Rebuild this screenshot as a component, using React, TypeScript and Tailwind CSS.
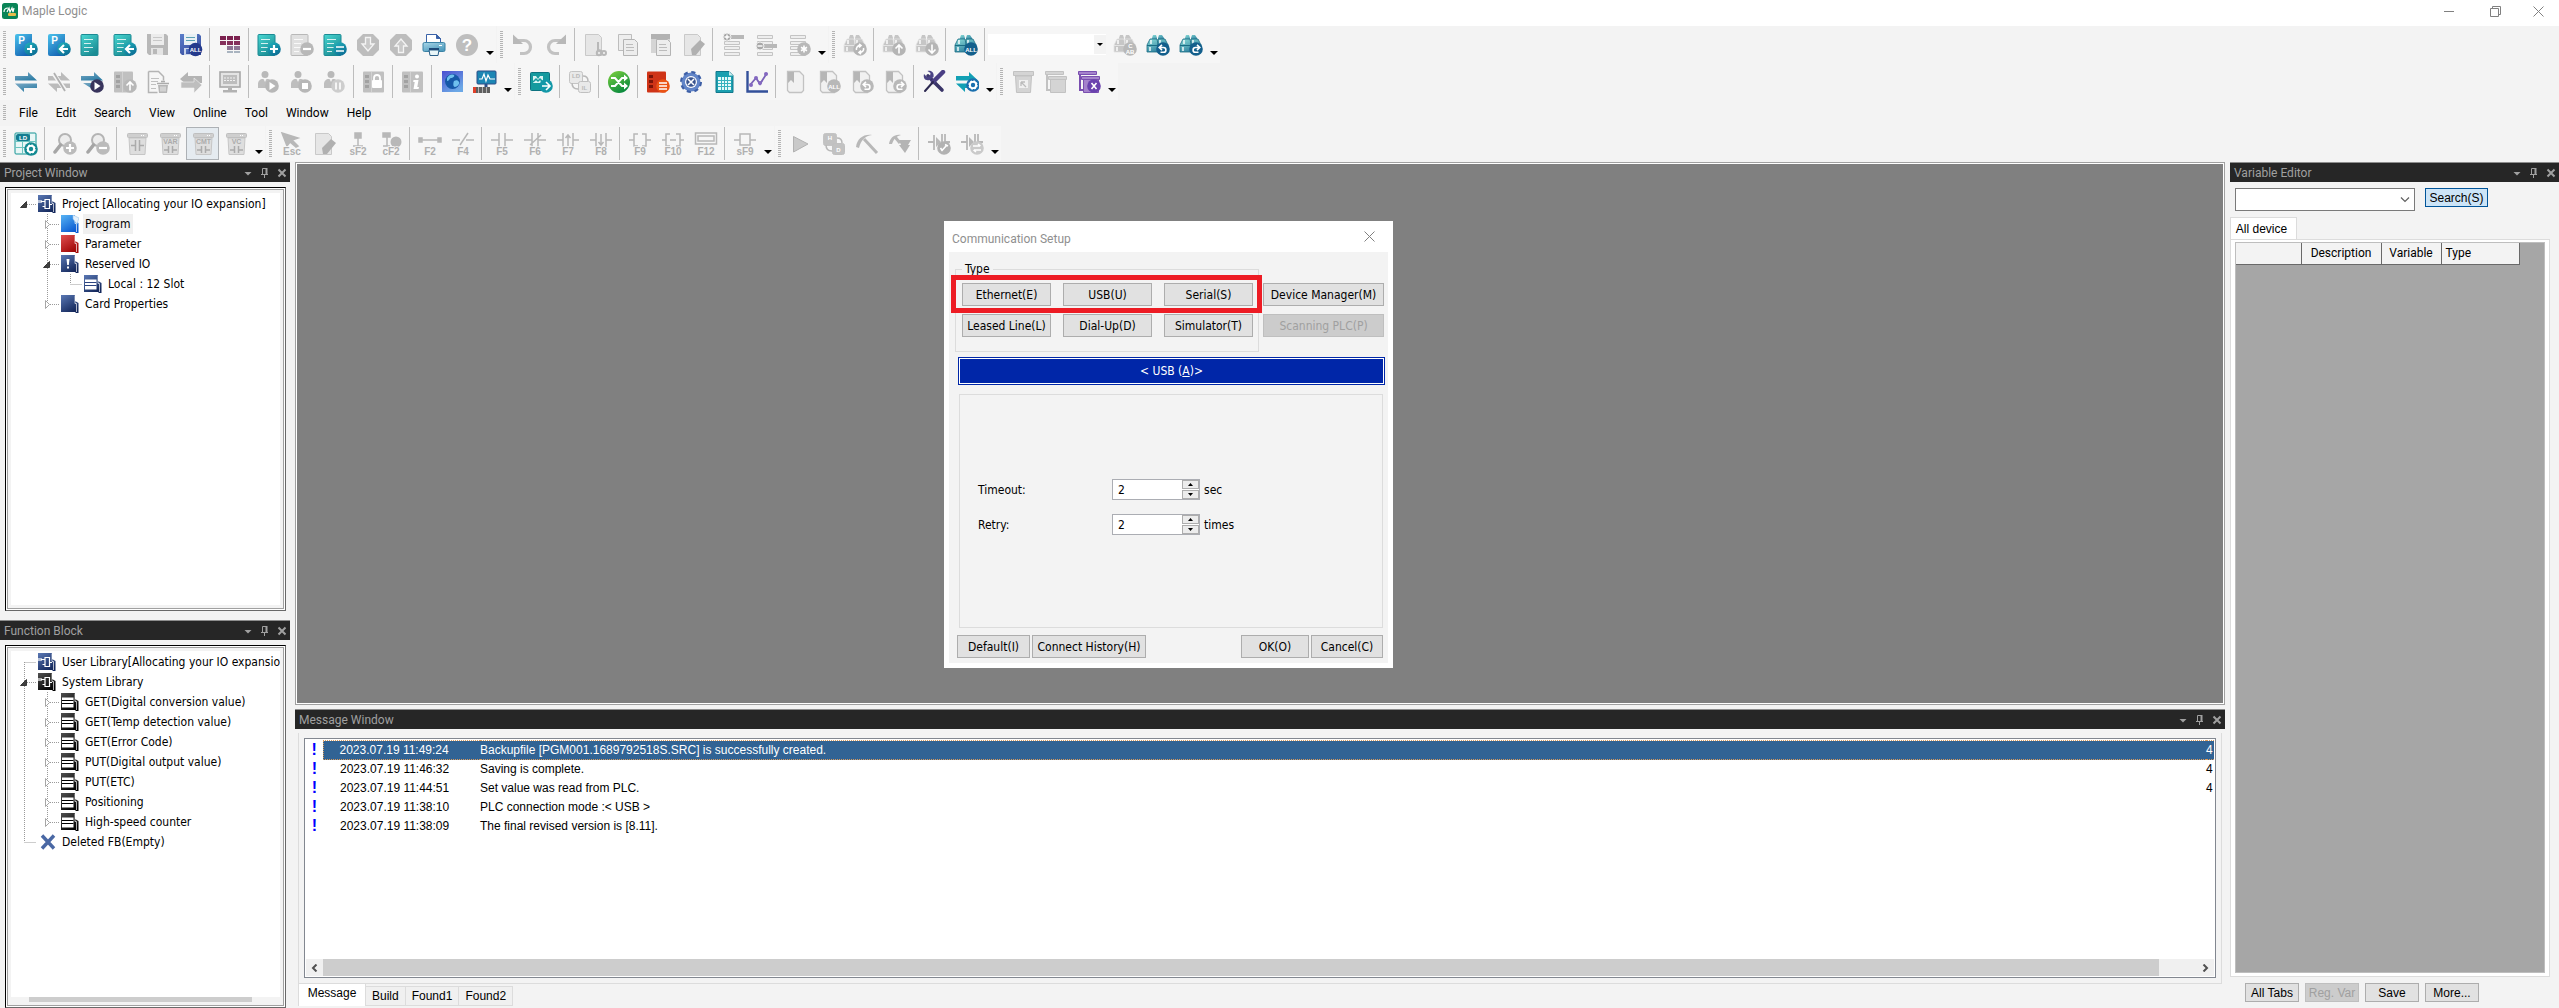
import type { ReactNode } from "react"

const GRAY = "#b8b8b8"

const MARKS: Record<string, string> = {
  plus: "M-4 0h8M0-4v8",
  minus: "M-4 0h8",
  left: "M4 0h-7M0-4l-4 4 4 4",
  right: "M-4 0h7M0-4l4 4-4 4",
  up: "M0 4.5v-8M-3.5-.5L0-4l3.5 3.5",
  down: "M0-4.5v8M-3.5.5L0 4l3.5-3.5",
  lines: "M-4-3h8M-4 0h8M-4 3h8",
  equal: "M-4-2h8M-4 2h8",
  undo: "M-3.5-1.5h4a2.4 2.4 0 0 1 0 4.8h-3M-1-4.2L-3.8-1.5-1 1.2",
  redo: "M3.5-1.5h-4a2.4 2.4 0 0 0 0 4.8h3M1-4.2L3.8-1.5 1 1.2",
  refresh: "M-3.5 1a3.6 3.6 0 0 1 4-4.5M3.5-1a3.6 3.6 0 0 1-4 4.5M-1-5l2 1.5-2 2M1 5l-2-1.5 2-2",
  cross: "M-2.5-3l5 6M2.5-3l-5 6",
  pause: "M-2-3.5v7M2-3.5v7",
  swap: "M-4-2h7M1-4l2.5 2M4 2h-7M-1 4l-2.5-2",
  star: "M0-3.5v7M-3-1.7l6 3.4M3-1.7l-6 3.4",
  wrench: "M-2.5 3l5-5.5M-3.5 0l2 3M1-3.5l3 1.5",
}

function Svg({ children }: { children: ReactNode }) {
  return (
    <svg viewBox="0 0 24 24" className="size-6 shrink-0" aria-hidden="true">
      {children}
    </svg>
  )
}

function Tag({ x, y, size = 6, fill = "#fff", children }: { x: number; y: number; size?: number; fill?: string; children: string }) {
  return (
    <text x={x} y={y} fontSize={size} fill={fill} textAnchor="middle" fontWeight="700" fontFamily="Liberation Sans, sans-serif">
      {children}
    </text>
  )
}

function Badge({ mark, fill = GRAY, x = 17, y = 16 }: { mark: string; fill?: string; x?: number; y?: number }) {
  return (
    <g>
      <circle cx={x} cy={y} r="6.8" fill={fill} />
      {mark === "ALL" && <Tag x={x} y={y + 2.5}>ALL</Tag>}
      {mark === "play" && <path d={`M${x - 2.5} ${y - 4}l6 4-6 4z`} fill="#fff" />}
      {mark === "stop" && <rect x={x - 3} y={y - 3} width="6" height="6" fill="#fff" />}
      {mark === "gear" && <Gear x={x} y={y} r={4} fill="#fff" hole={fill} />}
      {MARKS[mark] && (
        <path
          d={MARKS[mark]}
          transform={`translate(${x} ${y})`}
          fill="none"
          stroke="#fff"
          strokeWidth={mark === "plus" || mark === "minus" || mark === "left" ? 2.2 : 1.6}
        />
      )}
    </g>
  )
}

function Gear({ x, y, r, fill, hole }: { x: number; y: number; r: number; fill: string; hole: string }) {
  return (
    <g>
      <circle cx={x} cy={y} r={r} fill={fill} stroke={fill} strokeWidth={r / 3} strokeDasharray={`${r * 0.42} ${r * 0.365}`} />
      <circle cx={x} cy={y} r={r} fill={fill} />
      <circle cx={x} cy={y} r={r * 0.55} fill={hole} />
    </g>
  )
}

function ProjectDoc({ mark }: { mark: string }) {
  return (
    <Svg>
      <path d="M3 1h15v22H3a2 2 0 0 1-2-2V3a2 2 0 0 1 2-2z" fill="url(#blue)" />
      <Tag x={7.5} y={11} size={10}>P</Tag>
      <Badge mark={mark} fill="url(#sea)" />
    </Svg>
  )
}

function ListDoc({ mark, fill = "url(#teal)", badge = "url(#sea)" }: { mark?: string; fill?: string; badge?: string }) {
  const edge = fill === "url(#teal)" ? "#1b8a94" : GRAY
  return (
    <Svg>
      <rect x="1" y="1.5" width="17" height="21" rx="1" fill={fill} stroke={edge} />
      <path d="M4 6.5h9M4 10.5h7M4 14.5h9M4 18.5h5" stroke="#fff" strokeOpacity=".8" />
      {mark && <Badge mark={mark} fill={badge} />}
    </Svg>
  )
}

function Floppy({ on }: { on?: boolean }) {
  const c = on ? "url(#navy)" : GRAY
  return (
    <Svg>
      <path d="M1 1h19l2 2v19H3l-2-2z" fill={c} />
      <rect x="5" y="1" width="13" height="11" fill={on ? "#e8f0f4" : "#ececec"} />
      <path d="M7 4.5h9M7 7.5h9" stroke={on ? "#5aa0b4" : "#c8c8c8"} />
      <rect x="5" y="15" width="12" height="7" fill={on ? "#c9d4ea" : "#e4e4e4"} />
      <rect x="7" y="16" width="4" height="5" fill={c} />
      {on && <Badge mark="ALL" fill="#243a8c" x={16.5} y={16.5} />}
    </Svg>
  )
}

function GridIcon() {
  return (
    <Svg>
      <path d="M2 3h6v4H2zM9 3h6v4H9zM16 3h6v4h-6z" fill="#7d2350" />
      <path d="M2 8h6v4H2zM9 8h6v4H9zM16 8h6v4h-6z" fill="#85305c" />
      <path d="M9 13h6v4H9zM16 13h6v4h-6z" fill="#8d7594" />
      <path d="M9 18h6v2H9zM16 18h6v2h-6z" fill="#a9b4c0" />
    </Svg>
  )
}

function ArrowDisc({ up }: { up?: boolean }) {
  return (
    <Svg>
      <path d="M7 1h10l6 6v10l-6 6H7l-6-6V7z" fill="#bdbdbd" />
      <path
        d="M9.5 4.5h5V11H18l-6 7-6-7h3.500z"
        transform={up ? "rotate(180 12 12)" : undefined}
        fill="#c9c9c9"
        stroke="#f4f4f4"
        strokeWidth="1.3"
      />
    </Svg>
  )
}

function Printer() {
  return (
    <Svg>
      <path d="M4.5 12V1.5h10l4 4V12z" fill="#fff" stroke="#3a62a8" />
      <path d="M14.5 1.5v4h4z" fill="#3a62a8" stroke="#3a62a8" />
      <rect x="1" y="9.5" width="22" height="9" rx="1.5" fill="url(#steel)" stroke="#3b82a5" />
      <path d="M17 12.5h3" stroke="#fff" />
      <path d="M7 17h10l-1 5.500H8z" fill="#e9f6f8" stroke="#2a5f88" />
      <path d="M7 16h10" stroke="#1e4a78" strokeWidth="2" />
    </Svg>
  )
}

function Help() {
  return (
    <Svg>
      <circle cx="12" cy="12" r="11" fill="#bebebe" />
      <Tag x={12} y={18} size={17}>?</Tag>
    </Svg>
  )
}

function Turn({ flip }: { flip?: boolean }) {
  return (
    <Svg>
      <g transform={flip ? "matrix(-1 0 0 1 24 0)" : undefined}>
        <path d="M6 7.5h7a6.500 6.500 0 0 1 0 13H9" fill="none" stroke="#c2c2c2" strokeWidth="3.2" />
        <path d="M2 1.5V11h10L8.500 7.500z" fill={GRAY} />
      </g>
    </Svg>
  )
}

function GrayDoc({ kind }: { kind: "cut" | "copy" | "paste" | "erase" }) {
  return (
    <Svg>
      {(kind === "cut" || kind === "erase") && <path d="M2.5 1.5h13l3 3v18h-16z" fill="#e6e6e6" stroke="#c9c9c9" />}
      {kind === "cut" && (
        <g fill="none" stroke={GRAY} strokeWidth="2">
          <path d="M15 9v9M16 17l4 2" />
          <circle cx="16" cy="20" r="2.2" />
          <circle cx="21" cy="20" r="2" />
        </g>
      )}
      {kind === "erase" && <path d="M9 16L18 7l5 4-9 11h-4z" fill="#b0b0b0" />}
      {kind === "copy" && <path d="M2.5 1.5h13v16h-13z" fill="#eee" stroke="#bdbdbd" />}
      {kind === "paste" && (
        <g>
          <path d="M2 2h19v18H2z" fill="#d5d5d5" />
          <path d="M2 1h19v5H2z" fill="#b2b2b2" />
        </g>
      )}
      {(kind === "copy" || kind === "paste") && (
        <g>
          <path d="M7.5 6.5h11l3 3v13h-14z" fill="#ededed" stroke="#b4b4b4" />
          <path d="M10 11.5h7M10 14.5h8M10 17.5h8" stroke="#bcbcbc" />
        </g>
      )}
    </Svg>
  )
}

function RowsIcon({ kind }: { kind: "add" | "del" | "star" }) {
  const y = kind === "add" ? 4 : 13
  return (
    <Svg>
      <path
        d="M3.5 2.5h15v3h-15zM3.5 8.5h15v3h-15zM3.5 13.5h15v3h-15zM3.5 19.5h15v3h-15z"
        fill="#eee"
        stroke="#c4c4c4"
      />
      {kind === "star" ? (
        <Badge mark="star" x={17} y={16} />
      ) : (
        <g>
          <path d={`M6 ${y - 2}h17v4H6z`} fill={GRAY} />
          <circle cx="6" cy={y} r="4" fill="#a8a8a8" stroke="#f0f0f0" />
          <path d={kind === "add" ? `M3.5 ${y}h5M6 ${y - 2.5}v5` : `M3.5 ${y}h5`} stroke="#fff" strokeWidth="1.4" />
        </g>
      )}
    </Svg>
  )
}

function Finder({ mark, on }: { mark: string; on?: boolean }) {
  const c = on ? "url(#bino)" : "#c6c6c6"
  const line = on ? "#1b6c84" : "#e4e4e4"
  return (
    <Svg>
      <path d="M6 5l1-3h3l1 3v3H5zM12 5l1-3h3l2 3v3h-6z" fill={c} />
      <path d="M4 6h7l1 5v8H1v-7zM12 6h7l3 6v7H12z" fill={c} stroke={line} strokeWidth=".8" />
      <path d="M1 12.5h11M12 12.5h9" stroke={line} />
      <path d="M5 7v4M14 7v4M4 14v4" stroke="#fff" strokeOpacity=".7" strokeWidth="2" />
      {mark === "CAB" ? (
        <g>
          <Badge mark="" />
          <Tag x={17.5} y={14.5}>C</Tag>
          <Tag x={17} y={20.5}>AB</Tag>
        </g>
      ) : (
        <Badge mark={mark} fill={on ? "#135f8c" : "#b5b5b5"} />
      )}
    </Svg>
  )
}

function Arrows({ kind }: { kind: "on" | "off" | "run" | "fat" | "gear" }) {
  if (kind === "fat")
    return (
      <Svg>
        <path d="M1 9l8-7v4h14v7H9v3z" fill="#b4b4b4" />
        <path d="M23 15l-8-7v4H2v6h13v5z" fill="#bebebe" stroke="#f4f4f4" strokeWidth=".6" />
      </Svg>
    )
  const c = kind === "off" ? "#bbb" : kind === "gear" ? "#12a0b4" : "url(#steelarrow)"
  return (
    <Svg>
      <path d="M1 6h13V2l9 8.500H1z" fill={c} />
      {kind !== "run" && <path d="M23 18H10v4l-9-8.500h22z" fill={c} />}
      {kind === "run" && <path d="M14 20L3 13h14z" fill={c} />}
      {kind === "off" && <path d="M6 3l13 18" stroke="#f5f5f5" strokeWidth="4" />}
      {kind === "off" && <path d="M7 3l11 18" stroke="#b0b0b0" strokeWidth="1.8" />}
      {kind === "run" && <Badge mark="play" fill="#38345c" />}
      {kind === "gear" && <Badge mark="gear" fill="#1a6fae" x={18} y={15} />}
    </Svg>
  )
}

function Plc({ kind }: { kind: "up" | "lock" | "info" | "red" }) {
  const red = kind === "red"
  return (
    <Svg>
      <rect x="1" y="1.5" width={kind === "up" || red ? 19 : 21} height="21" rx="1" fill={red ? "#cf3417" : "#c0c0c0"} />
      <path d="M3 5h4v3H3zM3 10h4v3H3zM3 15h4v3H3z" fill={red ? "#7c1408" : "#a2a2a2"} />
      {!red && <path d="M9.5 2v20" stroke="#d2d2d2" />}
      {kind === "up" && <Badge mark="up" />}
      {red && <Badge mark="lines" fill="#ea5314" />}
      {kind === "lock" && (
        <g>
          <rect x="10" y="10" width="10" height="8" rx="1" fill="#fff" />
          <path d="M12 10V8a3 3 0 0 1 6 0v2" fill="none" stroke="#fff" strokeWidth="1.8" />
        </g>
      )}
      {kind === "info" && (
        <g fill="#fff">
          <circle cx="16" cy="6.5" r="2" />
          <path d="M12.5 10h5l-1.200 7h1.700l-.5 2h-5l1.200-7h-1.500z" />
        </g>
      )}
    </Svg>
  )
}

function DocTrash() {
  return (
    <Svg>
      <path d="M2.5 1.5h10l5 5v4M2.5 1.5v21h9" fill="none" stroke="#b4b4b4" strokeWidth="1.5" />
      <path d="M5 8.5h8M5 11.5h7M5 14.5h5M5 18.5h5" stroke="#c0c0c0" />
      <path d="M11 13.5h12M15 11.5h4" stroke="#ababab" strokeWidth="1.5" />
      <path d="M12 15h10l-1 8h-8z" fill="#b6b6b6" />
      <path d="M15 16.5v5M17 16.5v5M19 16.5v5" stroke="#eee" />
    </Svg>
  )
}

function Monitor() {
  return (
    <Svg>
      <rect x="2" y="2" width="20" height="15" fill="#e4e4e4" stroke="#a8a8a8" strokeWidth="1.6" />
      <rect x="5" y="5" width="14" height="9" fill="#bdbdbd" />
      <path d="M6 8h12M6 10.5h12" stroke="#f0f0f0" strokeDasharray="2 1" />
      <path d="M10 18h4v2h5v2.500H5V20h5z" fill="#b2b2b2" />
    </Svg>
  )
}

function Person({ mark }: { mark: string }) {
  return (
    <Svg>
      <circle cx="8" cy="4.5" r="3.5" fill="#b9b9b9" />
      <path d="M1 18v-4c0-3 2-5 5-5h4c3 0 5 2 5 5v4z" fill="#bebebe" />
      <path d="M6.5 9L8 12l1.500-3z" fill="#f3f3f3" />
      <Badge mark={mark} x={15} y={16} fill={mark === "pause" ? "#cdcdcd" : "#b7b7b7"} />
    </Svg>
  )
}

function Globe() {
  return (
    <Svg>
      <rect x="2" y="1" width="21" height="21" fill="url(#globebg)" />
      <circle cx="12.5" cy="11.5" r="7.5" fill="#1558a8" />
      <path d="M7 8c2-4 6-4 7-3s-1 3-3 3-1 3-4 3zM14 11c2-1 4-1 5 1s-2 5-4 5-2-4-1-6z" fill="#6fc0ee" />
    </Svg>
  )
}

function Scope() {
  return (
    <Svg>
      <rect x="4" y="1" width="19" height="13" rx="1" fill="#1c86b4" stroke="#2c4f88" />
      <path d="M6 9h3l2-5 2 7 2-6 2 4h5" fill="none" stroke="#fff" strokeWidth="1.2" />
      <path d="M13 14v3" stroke="#2c4f88" strokeWidth="3" />
      <rect x="0" y="17" width="17" height="6" fill="#5f5f5f" />
      <rect x="0" y="17" width="3" height="6" fill="#e0402a" />
      <path d="M5.5 17v6M9.5 17v6M13.5 17v6" stroke="#b2b2b2" />
    </Svg>
  )
}

function ScreenOut() {
  return (
    <Svg>
      <rect x="1.5" y="2.5" width="19" height="18" rx="1" fill="#159a9e" stroke="#0d7280" />
      <path d="M4 6h3l2 3 2-3h3v7H4z" fill="#d9f3f2" />
      <path d="M4 12l3-3 2 2 2-2 3 3" fill="none" stroke="#159a9e" strokeWidth="1.5" />
      <Badge mark="right" fill="#1398a8" />
    </Svg>
  )
}

function Convert({ a, b, dark }: { a: string; b: string; dark?: boolean }) {
  const c = dark ? "#c2c2c2" : "#e9e9e9"
  return (
    <Svg>
      <rect x="1.5" y="1.5" width="13" height="12" rx="2" fill={c} stroke="#c4c4c4" />
      <rect x="10.5" y="11.5" width="12" height="11" rx="2" fill={c} stroke="#c0c0c0" />
      <Tag x={8} y={8} fill={dark ? "#fff" : "#b8b8b8"}>{a}</Tag>
      <Tag x={16.5} y={20} fill={dark ? "#fff" : "#b8b8b8"}>{b}</Tag>
      <path d="M15 6c4 0 5 2 5 5M4 13c0 4 2 6 6 6" fill="none" stroke="#b8b8b8" strokeWidth="1.5" />
    </Svg>
  )
}

function Shuffle() {
  return (
    <Svg>
      <circle cx="12" cy="12" r="11" fill="url(#green)" />
      <path d="M4 8h4l7 8h4M4 16h4l7-8h4" fill="none" stroke="#fff" strokeWidth="2" />
      <path d="M17 4.5l4 3.500-4 3.500zM17 12.5l4 3.500-4 3.500z" fill="#fff" />
    </Svg>
  )
}

function GearIcon() {
  return (
    <Svg>
      <circle cx="12" cy="12" r="9.5" fill="#5a7fc4" stroke="#3d5fa6" strokeWidth="3" strokeDasharray="4 3.46" />
      <circle cx="12" cy="12" r="9" fill="#6285c8" />
      <circle cx="12" cy="12" r="6" fill="#fff" />
      <circle cx="12" cy="12" r="4.8" fill="#3a5590" />
      <path d="M9 9l6 6M15 9l-6 6" stroke="#fff" strokeWidth="1.6" />
    </Svg>
  )
}

function Calc() {
  return (
    <Svg>
      <path d="M4 1.5h13l4 4v17H4z" fill="#1ba0b0" stroke="#12788c" />
      <path d="M17 1.5v4h4z" fill="#cdeef0" />
      <rect x="6" y="7" width="13" height="13" fill="#e6fafa" />
      <path d="M6 10.5h13M6 13.5h13M6 16.5h13M9.5 7v13M12.5 7v13M15.5 7v13" stroke="#35b2be" />
    </Svg>
  )
}

function Chart() {
  return (
    <Svg>
      <path d="M2.5 1v20.500H23" fill="none" stroke="#33509a" strokeWidth="2.4" />
      <path d="M5 15l6-7 4 6 7-11" fill="none" stroke="#7a62b8" strokeWidth="1.8" />
      <circle cx="6" cy="15" r="2" fill="#8468c0" />
      <circle cx="11" cy="8" r="2" fill="#8468c0" />
      <circle cx="15" cy="13" r="2" fill="#8468c0" />
      <circle cx="21" cy="4" r="2" fill="#8468c0" />
    </Svg>
  )
}

function BookmarkIcon({ mark }: { mark?: string }) {
  return (
    <Svg>
      <path d="M3.5 1.5h12l4 4v15l-2 2h-12l-2-2v-17z" fill="#f1f1f1" stroke="#c2c2c2" strokeWidth="1.3" />
      <path d="M4 2h6v11l-3-3-3 3z" fill="#b6b6b6" />
      {mark && <Badge mark={mark} />}
    </Svg>
  )
}

function Tools() {
  return (
    <Svg>
      <path d="M6 6l14 14" stroke="#3a3568" strokeWidth="3.6" strokeLinecap="round" />
      <path d="M2 4l3 3 3-1 .5-3-3-2c4-1 7 2 6 6l-4 3C3 11 1 8 2 4z" fill="#4a4384" />
      <path d="M21 2L11 12" stroke="#4a3f84" strokeWidth="4.5" strokeLinecap="round" />
      <path d="M11 12l-8 9" stroke="#2c2850" strokeWidth="2" strokeLinecap="round" />
    </Svg>
  )
}

function Boxes({ kind }: { kind: "one" | "many" | "close" }) {
  const on = kind === "close"
  const c = on ? "#a583cc" : "#d4d4d4"
  const e = on ? "#7a4fb0" : "#c2c2c2"
  return (
    <Svg>
      {kind !== "one" && <path d="M3 3v17h3" fill="none" stroke={e} strokeWidth="2" />}
      {kind !== "one" && <path d="M1.5 1.5h18v3h-18z" fill={c} stroke={e} />}
      <path d={kind === "one" ? "M4.5 6h16l-1 16.500h-14z" : "M6.5 9h15v13.500h-15z"} fill={c} stroke={e} />
      <path d={kind === "one" ? "M2.5 1.5h20v4h-20z" : "M4.5 6.5h18v3h-18z"} fill={c} stroke={e} />
      {kind === "one" && <path d="M8 10h9v8H8z" fill="#f0f0f0" />}
      {kind === "one" && <path d="M10 12l5 5M10 12h4M10 12v4" stroke="#bcbcbc" strokeWidth="1.3" />}
      {on && <Badge mark="cross" fill="#6a42ae" />}
    </Svg>
  )
}

function LadderGrid() {
  return (
    <Svg>
      <rect x="1" y="1" width="21" height="21" rx="1" fill="#e9f7f6" stroke="#159494" />
      <path d="M1 9.5h21M1 15.5h21M8.5 9v13M15.5 1v21" stroke="#6cc4c0" />
      <rect x="2" y="2" width="14" height="7" rx="2" fill="#137c90" />
      <Tag x={9} y={8}>LD</Tag>
      <Badge mark="gear" fill="#138a92" x={17} y={17} />
    </Svg>
  )
}

function Lens({ mark }: { mark: string }) {
  return (
    <Svg>
      <circle cx="12" cy="8" r="6" fill="#ededed" stroke="#b4b4b4" strokeWidth="2" />
      <path d="M7.5 13L2 20" stroke="#a6a6a6" strokeWidth="3.5" strokeLinecap="round" />
      <Badge mark={mark} x={17} y={16} fill="#bbb" />
    </Svg>
  )
}

function LadderBox({ text }: { text?: string }) {
  return (
    <Svg>
      <path d="M4 6h17l-1 16.500H5z" fill="#dedede" stroke="#c6c6c6" />
      <rect x="2.5" y="1.5" width="20" height="4" rx="1" fill="#cfcfcf" stroke="#bfbfbf" />
      <path d="M16 3.5h4" stroke="#fff" strokeDasharray="1 1" />
      {text && <Tag x={12.5} y={12} size={7} fill="#ababab">{text}</Tag>}
      <path
        d={text ? "M6 18h4M14 18h5M10.5 14v7M14.5 14v7" : "M6 13.5h4M14 13.5h5M10.5 8v11M14.5 8v11"}
        stroke="#ababab"
        strokeWidth="1.5"
      />
    </Svg>
  )
}

const CONTACTS: Record<string, string> = {
  F2: "M1 8h22M1 6v4h3v-4zM20 6v4h3v-4z",
  F4: "M1 8h8M15 8h8M9 13L17 1",
  F5: "M1 8h8M15 8h8M9 1v14M15 1v14",
  F6: "M1 8h8M15 8h8M9 1v14M15 1v14M7 13L18 3",
  F7: "M1 8h6M17 8h6M7 1v14M17 1v14M12 14V3M9.500 6L12 3l2.500 3",
  F8: "M1 8h6M17 8h6M7 1v14M17 1v14M12 2v11M9.500 10L12 13l2.500-3",
  F9: "M1 8h5M18 8h5M10 2H6v12h4M14 2h4v12h-4",
  F10: "M1 8h4M19 8h4M9 2H5v12h4M15 2h4v12h-4M9 8h6",
  F12: "M1.500 1h21v11h-21zM4 4h16v5H4z",
  sF9: "M1 8h6M17 8h6M7 2h10v11H7z",
  Esc: "M2 1l16 5-6 2 6 6-2 1-6-5-3 4z",
  sF2: "M9 1h6v5h-6zM12 6v8M7 14h10",
  cF2: "M4 1h7v4h-7zM8 5v9M4 14h7",
}

function KeyIcon({ label }: { label: string }) {
  const solid = label === "Esc" || label === "sF2" || label === "cF2" || label === "F2"
  return (
    <Svg>
      <path d={CONTACTS[label]} fill={solid ? GRAY : "none"} stroke={GRAY} strokeWidth="1.500" />
      {label === "cF2" && <circle cx="17" cy="10" r="5.500" fill={GRAY} />}
      <text
        x="12"
        y="23"
        fontSize={10}
        fontWeight="700"
        textAnchor="middle"
        fill="#b0b0b0"
        stroke="#f6f6f6"
        strokeWidth="1.500"
        paintOrder="stroke"
        fontFamily="Liberation Sans, sans-serif"
      >
        {label}
      </text>
    </Svg>
  )
}

function PlayIcon() {
  return (
    <Svg>
      <path d="M4.5 4.5L19 12 4.5 20z" fill="#c9c9c9" stroke="#b2b2b2" />
    </Svg>
  )
}

function Pick({ down }: { down?: boolean }) {
  return (
    <Svg>
      <path d={down ? "M1 12C2 6 6 2 13 3c-4 1-7 3-9 9z" : "M1 15C2 7 8 2 17 3 10 4 6 8 4 16z"} fill={GRAY} />
      <path d={down ? "M7 5l5 6" : "M9 7l13 14"} stroke={GRAY} strokeWidth="3" />
      {down && <path d="M11 8h12l-3 5h2l-5 8-6-8h2z" fill="#b4b4b4" />}
    </Svg>
  )
}

function ContactBadge({ mark }: { mark: string }) {
  return (
    <Svg>
      <path d="M1 10h6M7 3v15M15 2v9M18 10h5M18 2v8" stroke={GRAY} strokeWidth="1.8" />
      <path d="M9 5l5 5-5 5z" fill={GRAY} />
      <Badge mark={mark} fill={mark === "swap" ? "#cacaca" : "#b2b2b2"} />
    </Svg>
  )
}

type Item = [string, ReactNode] | "sep" | "combo"

function Toolbar({ label, items }: { label: string; items: Item[] }) {
  return (
    <div role="toolbar" aria-label={label} className="flex h-full items-center bg-[#f6f6f6]">
      <Grip />
      {items.map((item, i) => {
        if (item === "sep") return <span key={i} className="mr-[3px] ml-[2px] h-[33px] w-px bg-[#bdbdbd]" />
        if (item === "combo")
          return (
            <div key={i} className="mr-[2px] flex h-[21px] w-[118px] items-center bg-white">
              <select aria-label="Search text" className="h-full min-w-0 flex-1 appearance-none bg-white text-xs outline-none" />
              <span className="flex h-[19px] w-3 items-center justify-center bg-[#f3f3f3]">
                <svg viewBox="0 0 6 3" className="h-[3px] w-[6px]" aria-hidden="true">
                  <path d="M0 0h6L3 3z" />
                </svg>
              </span>
            </div>
          )
        const [name, icon] = item
        const active = name === "Show comments"
        return (
          <button
            key={i}
            type="button"
            aria-label={name}
            className={
              active
                ? "flex size-[33px] items-center justify-center border border-[#adb1b5] bg-[#e5ebf0]"
                : "flex size-[33px] items-center justify-center"
            }
          >
            {icon}
          </button>
        )
      })}
      <button type="button" aria-label={`${label} options`} className="flex h-[33px] w-[13px] items-end justify-center pb-[6px]">
        <svg viewBox="0 0 8 4" className="h-1 w-2" aria-hidden="true">
          <path d="M0 0h8L4 4z" />
        </svg>
      </button>
    </div>
  )
}

function Grip() {
  return (
    <svg viewBox="0 0 9 28" className="h-7 w-[9px] shrink-0 last-of-type:mr-0" aria-hidden="true">
      <path d="M4.5 0v28" stroke="#b4b4b4" strokeWidth="3" strokeDasharray="1 1" />
    </svg>
  )
}

const projectItems: Item[] = [
  ["New project", <ProjectDoc mark="plus" />],
  ["Open project", <ProjectDoc mark="left" />],
  ["New program", <ListDoc />],
  ["Open program", <ListDoc mark="left" />],
  ["Save", <Floppy />],
  ["Save all", <Floppy on />],
  "sep",
  ["Card layout", <GridIcon />],
  "sep",
  ["Add list", <ListDoc mark="plus" />],
  ["Remove list", <ListDoc mark="minus" fill="#e0e0e0" badge={GRAY} />],
  ["List properties", <ListDoc mark="equal" />],
  ["Download", <ArrowDisc />],
  ["Upload", <ArrowDisc up />],
  ["Print", <Printer />],
  ["Help", <Help />],
]

const editItems: Item[] = [
  ["Undo", <Turn />],
  ["Redo", <Turn flip />],
  "sep",
  ["Cut", <GrayDoc kind="cut" />],
  ["Copy", <GrayDoc kind="copy" />],
  ["Paste", <GrayDoc kind="paste" />],
  ["Erase", <GrayDoc kind="erase" />],
  "sep",
  ["Insert row", <RowsIcon kind="add" />],
  ["Delete row", <RowsIcon kind="del" />],
  ["Row options", <RowsIcon kind="star" />],
]

const findItems: Item[] = [
  ["Replace", <Finder mark="refresh" />],
  "sep",
  ["Find previous", <Finder mark="up" />],
  ["Find next", <Finder mark="down" />],
  "sep",
  ["Find all", <Finder mark="ALL" on />],
  "sep",
  "combo",
  ["Find word", <Finder mark="CAB" />],
  ["Find back", <Finder mark="undo" on />],
  ["Find forward", <Finder mark="redo" on />],
]

const onlineItems: Item[] = [
  ["Connect", <Arrows kind="on" />],
  ["Disconnect", <Arrows kind="off" />],
  ["Connect and run", <Arrows kind="run" />],
  ["Write PLC", <Plc kind="up" />],
  ["Clear program", <DocTrash />],
  ["Compare", <Arrows kind="fat" />],
  "sep",
  ["Monitor", <Monitor />],
  "sep",
  ["Run", <Person mark="play" />],
  ["Stop", <Person mark="stop" />],
  ["Pause", <Person mark="pause" />],
  "sep",
  ["PLC lock", <Plc kind="lock" />],
  "sep",
  ["PLC information", <Plc kind="info" />],
  "sep",
  ["Network", <Globe />],
  ["Trend", <Scope />],
]

const toolItems: Item[] = [
  ["Export", <ScreenOut />],
  "sep",
  ["Convert LD to IL", <Convert a="LD" b="IL" />],
  "sep",
  ["Cross reference", <Shuffle />],
  "sep",
  ["PLC error list", <Plc kind="red" />],
  ["Parameters", <GearIcon />],
  ["Calculator", <Calc />],
  ["Chart", <Chart />],
  "sep",
  ["Bookmark", <BookmarkIcon />],
  ["All bookmarks", <BookmarkIcon mark="ALL" />],
  ["Previous bookmark", <BookmarkIcon mark="undo" />],
  ["Next bookmark", <BookmarkIcon mark="redo" />],
  "sep",
  ["Tools", <Tools />],
  ["Communication setup", <Arrows kind="gear" />],
]

const windowItems: Item[] = [
  ["Window", <Boxes kind="one" />],
  ["Cascade", <Boxes kind="many" />],
  ["Close all", <Boxes kind="close" />],
]

const viewItems: Item[] = [
  ["Ladder settings", <LadderGrid />],
  "sep",
  ["Zoom in", <Lens mark="plus" />],
  ["Zoom out", <Lens mark="minus" />],
  "sep",
  ["Show devices", <LadderBox />],
  ["Show variables", <LadderBox text="VAR" />],
  ["Show comments", <LadderBox text="CMT" />],
  ["Show both", <LadderBox text="VC" />],
]

const key = (label: string): Item => [label, <KeyIcon label={label} />]

const ladderItems: Item[] = [
  key("Esc"),
  ["Erase cell", <GrayDoc kind="erase" />],
  key("sF2"),
  key("cF2"),
  "sep",
  key("F2"),
  key("F4"),
  "sep",
  key("F5"),
  key("F6"),
  key("F7"),
  key("F8"),
  "sep",
  key("F9"),
  key("F10"),
  key("F12"),
  "sep",
  key("sF9"),
]

const debugItems: Item[] = [
  ["Start", <PlayIcon />],
  ["Hex and decimal", <Convert a="H" b="D" dark />],
  ["Build", <Pick />],
  ["Build and download", <Pick down />],
  "sep",
  ["Edit contact", <ContactBadge mark="wrench" />],
  ["Swap contact", <ContactBadge mark="swap" />],
]

function Defs() {
  const grads: [string, string, string][] = [
    ["blue", "#4cc3ec", "#1565b4"],
    ["teal", "#49d8d2", "#1a8c94"],
    ["sea", "#22b4bc", "#0d6f96"],
    ["navy", "#5b7ecb", "#3a50a0"],
    ["steel", "#a9d6e8", "#4f9cbe"],
    ["steelarrow", "#7ba9c4", "#2f7ea6"],
    ["bino", "#8adcd8", "#2a7c9c"],
    ["globebg", "#4b4fd0", "#6ca8e6"],
    ["green", "#7fd23c", "#0a8a3e"],
    ["tblue", "#5a78b4", "#14285c"],
    ["tprog", "#58b4f4", "#0a5ad2"],
    ["tred", "#e05050", "#a00808"],
    ["tblack", "#505050", "#000000"],
  ]
  return (
    <svg className="absolute size-0" aria-hidden="true">
      <defs>
        {grads.map(([id, a, b]) => (
          <linearGradient key={id} id={id} x1="0" y1="0" x2=".6" y2="1">
            <stop stopColor={a} />
            <stop offset="1" stopColor={b} />
          </linearGradient>
        ))}
      </defs>
    </svg>
  )
}

function TitleBar() {
  return (
    <header className="flex h-[26px] shrink-0 items-center bg-white pb-1 pl-[2px]">
      <svg viewBox="0 0 16 16" className="size-4" aria-hidden="true">
        <rect width="16" height="16" rx="2.5" fill="#0a8457" />
        <path d="M2 9c0-3 2-4 4-4M5 9l2-4 1 4 2-4 1 4 1-4" fill="none" stroke="#fff" strokeWidth="1.2" />
        <rect x="6" y="10" width="8" height="3" rx="1" fill="#e8bd4a" />
      </svg>
      <h1 className="ml-[4px] text-xs text-[#8f8f8f]">Maple Logic</h1>
      <div className="ml-auto flex text-[#808080]">
        <button type="button" aria-label="Minimize" className="flex h-[22px] w-[45px] items-center justify-center">
          <svg viewBox="0 0 11 11" className="size-[11px]" fill="none" stroke="currentColor">
            <path d="M0 5.5h10" />
          </svg>
        </button>
        <button type="button" aria-label="Restore" className="flex h-[22px] w-[46px] items-center justify-center">
          <svg viewBox="0 0 11 11" className="size-[11px]" fill="none" stroke="currentColor">
            <path d="M.5 2.5h8v8h-8zM2.5 2.5v-2h8v8h-2" />
          </svg>
        </button>
        <button type="button" aria-label="Close" className="flex h-[22px] w-[41px] items-center justify-center">
          <svg viewBox="0 0 11 11" className="size-[11px]" fill="none" stroke="currentColor">
            <path d="M.5.5l10 10M10.5.5l-10 10" />
          </svg>
        </button>
      </div>
    </header>
  )
}

function MenuBar() {
  const menus = ["File", "Edit", "Search", "View", "Online", "Tool", "Window", "Help"]
  return (
    <nav className="flex h-[26px] items-center">
      <svg viewBox="0 0 9 16" className="h-4 w-[9px]" aria-hidden="true">
        <path d="M4.5 0v16" stroke="#b4b4b4" strokeWidth="3" strokeDasharray="1 1" />
      </svg>
      <ul className="flex gap-[18px] pl-[10px] text-xs text-black">
        {menus.map((m) => (
          <li key={m}>
            <button type="button">{m}</button>
          </li>
        ))}
      </ul>
    </nav>
  )
}

function PanelHeader({ title }: { title: string }) {
  return (
    <header className="flex h-5 shrink-0 items-center border-t border-[#8d8d8d] bg-[#262626] pl-1 text-[#a0a0a0]">
      <h2 className="text-xs">{title}</h2>
      <div className="ml-auto flex items-center gap-[7px] pr-[3px]">
        <button type="button" aria-label="Panel menu">
          <svg viewBox="0 0 10 10" className="size-[10px]" fill="currentColor">
            <path d="M1.5 4h7L5 7.500z" />
          </svg>
        </button>
        <button type="button" aria-label="Pin panel">
          <svg viewBox="0 0 10 10" className="size-[10px]" fill="none" stroke="currentColor">
            <path d="M2.5 6V.5h4V6M1 6.5h7M4.5 7v3" />
            <path d="M6.5 0v6" strokeWidth="2" />
          </svg>
        </button>
        <button type="button" aria-label="Close panel">
          <svg viewBox="0 0 10 10" className="size-[10px]" fill="none" stroke="currentColor" strokeWidth="2">
            <path d="M1.5 1.5l7 7M8.5 1.5l-7 7" />
          </svg>
        </button>
      </div>
    </header>
  )
}

type Node = { text: string; icon: string; cells: string[]; active?: boolean }

const projectTree: Node[] = [
  { text: "Project [Allocating your IO expansion]", icon: "block", cells: ["open-root"] },
  { text: "Program", icon: "program", cells: ["", "closed"], active: true },
  { text: "Parameter", icon: "red", cells: ["", "closed"] },
  { text: "Reserved IO", icon: "alert", cells: ["", "open"] },
  { text: "Local : 12 Slot", icon: "rack", cells: ["", "line", "elbow"] },
  { text: "Card Properties", icon: "card", cells: ["", "closed-end"] },
]

const functionTree: Node[] = [
  { text: "User Library[Allocating your IO expansion]", icon: "block", cells: ["start"] },
  { text: "System Library", icon: "block-dark", cells: ["open"] },
  { text: "GET(Digital conversion value)", icon: "list", cells: ["line", "closed"] },
  { text: "GET(Temp detection value)", icon: "list", cells: ["line", "closed"] },
  { text: "GET(Error Code)", icon: "list", cells: ["line", "closed"] },
  { text: "PUT(Digital output value)", icon: "list", cells: ["line", "closed"] },
  { text: "PUT(ETC)", icon: "list", cells: ["line", "closed"] },
  { text: "Positioning", icon: "list", cells: ["line", "closed"] },
  { text: "High-speed counter", icon: "list", cells: ["line", "closed-end"] },
  { text: "Deleted FB(Empty)", icon: "deleted", cells: ["elbow"] },
]

const GUIDES: Record<string, string> = {
  "": "",
  line: "M11.5 0v20",
  elbow: "M11.5 0v10M11.5 10.5h12",
  start: "M11.5 10v10M11.5 10.5h12",
  open: "M11.5 0v20M14 10.5h9",
  "open-root": "M14 10.5h9",
  closed: "M11.5 0v20M14 10.5h9",
  "closed-end": "M11.5 0v10M14 10.5h9",
}

function Guide({ kind }: { kind: string }) {
  return (
    <svg viewBox="0 0 23 20" className="h-5 w-[23px] shrink-0" aria-hidden="true">
      <path d={GUIDES[kind]} fill="none" stroke="#9a9a9a" strokeDasharray="1 1" />
      {kind.startsWith("open") && <path d="M13.5 7.5v6h-6z" fill="#404040" stroke="#202020" strokeWidth=".8" />}
      {kind.startsWith("closed") && <path d="M9.5 6.5l4 4-4 4z" fill="#fff" stroke="#a6a6a6" />}
    </svg>
  )
}

const TREE_FILL: Record<string, string> = {
  block: "url(#tblue)",
  "block-dark": "url(#tblack)",
  program: "url(#tprog)",
  red: "url(#tred)",
  alert: "url(#tblue)",
  rack: "url(#tblue)",
  card: "url(#tblue)",
  list: "url(#tblack)",
}

function TreeIcon({ kind }: { kind: string }) {
  if (kind === "deleted")
    return (
      <svg viewBox="0 0 18 18" className="size-[18px] shrink-0" aria-hidden="true">
        <path d="M4 2.5l12 13M16 2.5l-12 13" stroke="#4a68a4" strokeWidth="3.4" />
      </svg>
    )
  const fill = TREE_FILL[kind]
  return (
    <svg viewBox="0 0 18 18" className="size-[18px] shrink-0" aria-hidden="true">
      <path d="M0 0h14v6l3.500 2v10h-3v-1H0z" fill={fill} />
      <path d="M14 .5v8h1.500V17" fill="none" stroke="#fff" strokeOpacity=".85" strokeWidth=".8" />
      {kind === "program" && <path d="M12 0l6 3-2 6-4-5z" fill="#e6f1fb" stroke="#9cc4ea" strokeWidth=".6" />}
      {kind.startsWith("block") && (
        <path d="M1 5v3M3 5v3M3.500 6.5h3.500M7 4.5h4.500v9H7zM11.500 9.5h2.500M4.500 11.5h2.500" fill="none" stroke="#fff" strokeWidth="1.2" />
      )}
      {kind === "alert" && <path d="M5.5 4h3l-.7 6H6.200zM6 11.5h2v2H6z" fill="#fff" />}
      {(kind === "rack" || kind === "list") && (
        <g>
          <path d="M1 4.5h11.500v10H1z" fill="#fff" />
          <path d="M1 7.5h11.500M1 10.5h11.500" stroke={kind === "list" ? "#000" : "#2c4480"} strokeWidth="1.200" />
        </g>
      )}
    </svg>
  )
}

function Tree({ label, nodes }: { label: string; nodes: Node[] }) {
  return (
    <ul role="tree" aria-label={label} className="pt-px pl-[2px] font-['DejaVu_Sans_Condensed','DejaVu_Sans',sans-serif] text-xs text-black">
      {nodes.map((n) => (
        <li key={n.text} role="treeitem" className="flex h-5 items-center whitespace-nowrap">
          {n.cells.map((c, i) => (
            <Guide key={i} kind={c} />
          ))}
          <span className="ml-[2px]">
            <TreeIcon kind={n.icon} />
          </span>
          <span className={n.active ? "ml-1 bg-[#f0f0f0] px-[2px] leading-5" : "ml-1 px-[2px] leading-5"}>{n.text}</span>
        </li>
      ))}
    </ul>
  )
}

function TreeBox({ children }: { children: ReactNode }) {
  return (
    <div className="mt-[5px] mr-[4px] ml-[5px] min-h-0 flex-1 border border-t-black border-r-[#696969] border-b-[#696969] border-l-black bg-white p-px">
      <div className="flex h-full flex-col overflow-hidden border border-[#a0a0a0] bg-[#f3f3f3] p-[3px]">
        <div className="flex min-h-0 flex-1 flex-col overflow-hidden bg-white">{children}</div>
      </div>
    </div>
  )
}

function LeftColumn() {
  return (
    <aside className="flex w-[290px] shrink-0 flex-col">
      <section className="mb-[9px] flex min-h-0 flex-1 flex-col">
        <PanelHeader title="Project Window" />
        <TreeBox>
          <Tree label="Project" nodes={projectTree} />
        </TreeBox>
      </section>
      <section className="flex h-[388px] shrink-0 flex-col">
        <PanelHeader title="Function Block" />
        <TreeBox>
          <Tree label="Function blocks" nodes={functionTree} />
          <div className="mt-auto h-[5px] shrink-0 bg-[#f3f3f3] px-[18px]">
            <div className="mr-[10px] h-full bg-[#cdcdcd]" />
          </div>
        </TreeBox>
      </section>
    </aside>
  )
}

const messages = [
  { time: "2023.07.19 11:49:24", text: "Backupfile [PGM001.1689792518S.SRC] is successfully created.", code: "4" },
  { time: "2023.07.19 11:46:32", text: "Saving is complete.", code: "4" },
  { time: "2023.07.19 11:44:51", text: "Set value was read from PLC.", code: "4" },
  { time: "2023.07.19 11:38:10", text: "PLC connection mode :< USB >", code: "" },
  { time: "2023.07.19 11:38:09", text: "The final revised version is [8.11].", code: "" },
]

function MessageWindow() {
  return (
    <section className="mt-1 flex h-[299px] shrink-0 flex-col">
      <PanelHeader title="Message Window" />
      <div className="mx-[3px] mt-1 flex min-h-0 flex-1 flex-col border border-t-0 border-[#dcdcdc] p-[5px]">
        <div className="flex min-h-0 flex-1 flex-col border border-[#828790] bg-white p-px font-['Liberation_Sans',Arial,sans-serif] text-xs text-black">
          <table className="w-full table-fixed border-collapse">
            <colgroup>
              <col className="w-[17px]" />
              <col className="w-[157px]" />
              <col />
              <col className="w-[8px]" />
            </colgroup>
            <tbody>
              {messages.map((m, i) => (
                <tr key={m.time} className="h-[19px]">
                  <td className="p-0 text-center text-base leading-[18px] font-bold text-[#0000ff]">!</td>
                  <td
                    className={
                      i === 0
                        ? "border-y border-l border-dotted border-[#d99a5b] bg-[#316394] py-0 pl-4 text-white"
                        : "py-0 pl-[17px]"
                    }
                  >
                    {m.time}
                  </td>
                  <td className={i === 0 ? "border-y border-dotted border-[#d99a5b] bg-[#316394] p-0 text-white" : "p-0"}>{m.text}</td>
                  <td className={i === 0 ? "border-y border-dotted border-[#d99a5b] bg-[#316394] p-0 text-white" : "p-0"}>{m.code}</td>
                </tr>
              ))}
            </tbody>
          </table>
          <div className="mt-auto flex h-[17px] items-stretch bg-[#f0f0f0]">
            <button type="button" aria-label="Scroll left" className="flex w-[17px] items-center justify-center">
              <svg viewBox="0 0 7 8" className="h-2 w-[7px]" fill="none" stroke="#505050" strokeWidth="2">
                <path d="M5.5.5L2 4l3.500 3.500" />
              </svg>
            </button>
            <div className="mr-[38px] flex-1 bg-[#cdcdcd]" />
            <button type="button" aria-label="Scroll right" className="flex w-[17px] items-center justify-center">
              <svg viewBox="0 0 7 8" className="h-2 w-[7px]" fill="none" stroke="#505050" strokeWidth="2">
                <path d="M1.5.5L5 4 1.5 7.500" />
              </svg>
            </button>
          </div>
        </div>
      </div>
      <div role="tablist" className="flex h-6 pl-[3px] font-['Liberation_Sans',Arial,sans-serif] text-xs text-black">
        <button type="button" role="tab" aria-selected="true" className="h-[22px] w-[68px] border-x border-[#dcdcdc] bg-white pb-1">
          Message
        </button>
        {["Build", "Found1", "Found2"].map((t) => (
          <button
            key={t}
            type="button"
            role="tab"
            aria-selected="false"
            className="mt-[2px] h-5 border border-l-0 border-[#dcdcdc] bg-[#f0f0f0] px-[6px]"
          >
            {t}
          </button>
        ))}
      </div>
    </section>
  )
}

function DialogButton({ children, disabled, className = "" }: { children: ReactNode; disabled?: boolean; className?: string }) {
  return (
    <button
      type="button"
      disabled={disabled}
      className={`h-[23px] border whitespace-nowrap ${disabled ? "border-[#bfbfbf] bg-[#cccccc] text-[#a0a0a0]" : "border-[#adadad] bg-[#e1e1e1]"} ${className}`}
    >
      {children}
    </button>
  )
}

function SpinField({ id, label, unit }: { id: string; label: string; unit: string }) {
  return (
    <div className="flex h-[21px] items-center">
      <label htmlFor={id} className="w-[134px]">
        {label}
      </label>
      <div className="flex h-[21px] w-[88px] border border-[#abadb3] bg-white">
        <input id={id} defaultValue="2" inputMode="numeric" className="min-w-0 flex-1 pl-[5px] outline-none" />
        <div className="flex w-[17px] flex-col gap-px">
          <button type="button" aria-label={`Increase ${label}`} className="flex flex-1 items-center justify-center border border-[#adadad] bg-[#ececec]">
            <svg viewBox="0 0 5 3" className="h-[3px] w-[5px]">
              <path d="M0 3h5L2.5 0z" />
            </svg>
          </button>
          <button type="button" aria-label={`Decrease ${label}`} className="flex flex-1 items-center justify-center border border-[#adadad] bg-[#ececec]">
            <svg viewBox="0 0 5 3" className="h-[3px] w-[5px]">
              <path d="M0 0h5L2.5 3z" />
            </svg>
          </button>
        </div>
      </div>
      <span className="ml-1">{unit}</span>
    </div>
  )
}

function CommunicationDialog() {
  const types = ["Ethernet(E)", "USB(U)", "Serial(S)", "Leased Line(L)", "Dial-Up(D)", "Simulator(T)"]
  return (
    <div
      role="dialog"
      aria-label="Communication Setup"
      className="absolute top-[57px] left-[647px] flex w-[449px] flex-col bg-white px-[5px] pb-[5px] text-black"
    >
      <header className="flex h-[31px] items-center pl-[3px]">
        <h2 className="pt-1 text-xs text-[#8f8f8f]">Communication Setup</h2>
        <button type="button" aria-label="Close" className="mr-[13px] ml-auto">
          <svg viewBox="0 0 11 11" className="size-[11px]" fill="none" stroke="#808080">
            <path d="M.5.5l10 10M10.5.5l-10 10" />
          </svg>
        </button>
      </header>
      <div className="bg-[#f3f3f3] pt-[9px] pr-[3px] pb-[5px] pl-[6px] font-['DejaVu_Sans_Condensed','DejaVu_Sans',sans-serif] text-xs">
        <div className="flex">
          <fieldset className="relative h-[91px] w-[304px] border border-[#dcdcdc] pt-[6px] pr-[5px] pl-[6px]">
            <legend className="px-[3px] leading-4">Type</legend>
            <div className="grid grid-cols-3 gap-x-3 gap-y-2">
              {types.map((t) => (
                <DialogButton key={t}>{t}</DialogButton>
              ))}
            </div>
            {/* call-out round the connection types */}
            <div className="pointer-events-none absolute top-[-2px] left-[-5px] h-[38px] w-[311px] border-[5px] border-[#ed1c24]" />
          </fieldset>
          <div className="mt-[22px] ml-1 flex w-[121px] flex-col gap-2">
            <DialogButton>Device Manager(M)</DialogButton>
            <DialogButton disabled>Scanning PLC(P)</DialogButton>
          </div>
        </div>
        <button
          type="button"
          className="mt-[5px] ml-[3px] block h-7 w-[427px] border border-[#0026a8] bg-white p-px text-white"
        >
          <span className="block bg-[#0026a8] leading-6">
            &lt; USB (<u>A</u>)&gt;
          </span>
        </button>
        <fieldset className="mt-[9px] ml-1 flex h-[234px] w-[424px] flex-col gap-[14px] border border-[#dcdcdc] pt-[84px] pl-[18px]">
          <SpinField id="timeout" label="Timeout:" unit="sec" />
          <SpinField id="retry" label="Retry:" unit="times" />
        </fieldset>
        <div className="mt-[7px] ml-[2px] flex w-[426px] gap-[2px]">
          <DialogButton className="w-[73px]">Default(I)</DialogButton>
          <DialogButton className="w-[114px]">Connect History(H)</DialogButton>
          <DialogButton className="ml-auto w-[68px]">OK(O)</DialogButton>
          <DialogButton className="w-[72px]">Cancel(C)</DialogButton>
        </div>
      </div>
    </div>
  )
}

function VariableEditor() {
  return (
    <aside className="ml-[5px] flex w-[329px] shrink-0 flex-col font-['Liberation_Sans',Arial,sans-serif] text-xs text-black">
      <div className="font-[Roboto,sans-serif]">
        <PanelHeader title="Variable Editor" />
      </div>
      <div className="flex items-start gap-[10px] pt-[6px] pl-[5px]">
        <div className="flex h-[23px] w-[180px] items-center border border-[#7a7a7a] bg-white">
          <select aria-label="Variable" className="h-full min-w-0 flex-1 appearance-none outline-none" />
          <svg viewBox="0 0 10 6" className="mr-1 h-[6px] w-[10px]" fill="none" stroke="#606060" strokeWidth="1.2">
            <path d="M1 .5L5 4.5 9 .5" />
          </svg>
        </div>
        <button type="button" className="h-[19px] w-[63px] border border-[#005499] bg-[#cce4f7]">
          Search(S)
        </button>
      </div>
      <div role="tablist" className="mt-[6px] flex h-[22px]">
        <button type="button" role="tab" aria-selected="true" className="-mb-px h-[23px] w-[67px] border border-b-0 border-[#dcdcdc] bg-white pr-1">
          All device
        </button>
      </div>
      <div className="mr-[9px] min-h-0 flex-1 border border-[#dcdcdc] bg-white px-[4px] pt-[2px] pb-[3px]">
        <div className="h-full border border-[#bebebe] bg-[#a6a6a6]">
          <table className="w-[283px] table-fixed border-collapse font-[Roboto,sans-serif] text-xs">
            <thead>
              <tr className="h-[21px] bg-[#f3f3f3]">
                <th className="w-[65px] border-r border-b border-[#696969]" aria-label="Row" />
                <th className="w-20 border-r border-b border-[#696969] p-0 font-normal">Description</th>
                <th className="w-[60px] border-r border-b border-[#696969] p-0 font-normal">Variable</th>
                <th className="w-[78px] border-r border-b border-[#696969] py-0 pr-0 pl-1 text-left font-normal">Type</th>
              </tr>
            </thead>
          </table>
        </div>
      </div>
      <div className="flex h-[31px] gap-[6px] pt-[6px] pl-[15px]">
        <button type="button" className="h-[19px] w-[54px] border border-[#adadad] bg-[#e1e1e1]">
          All Tabs
        </button>
        <button type="button" disabled className="h-[19px] w-[54px] border border-[#bfbfbf] bg-[#cccccc] text-[#a0a0a0]">
          Reg. Var
        </button>
        <button type="button" className="h-[19px] w-[54px] border border-[#adadad] bg-[#e1e1e1]">
          Save
        </button>
        <button type="button" className="h-[19px] w-[54px] border border-[#adadad] bg-[#e1e1e1]">
          More...
        </button>
      </div>
    </aside>
  )
}

export default function App() {
  return (
    <div className="flex h-screen flex-col overflow-hidden bg-[#f3f3f3] font-[Roboto,sans-serif]">
      <Defs />
      <TitleBar />
      <div className="shrink-0">
        <div className="flex h-[37px] gap-px">
          <Toolbar label="Project" items={projectItems} />
          <Toolbar label="Edit" items={editItems} />
          <Toolbar label="Find" items={findItems} />
        </div>
        <div className="flex h-[37px] gap-px">
          <Toolbar label="Online" items={onlineItems} />
          <Toolbar label="Tools" items={toolItems} />
          <Toolbar label="Windows" items={windowItems} />
        </div>
        <MenuBar />
        <div className="flex h-[35px] gap-px">
          <Toolbar label="View" items={viewItems} />
          <Toolbar label="Ladder" items={ladderItems} />
          <Toolbar label="Debug" items={debugItems} />
        </div>
      </div>
      <main className="flex min-h-0 flex-1 pt-px">
        <LeftColumn />
        <div className="ml-[5px] flex min-w-0 flex-1 flex-col">
          <div className="min-h-0 flex-1 border border-[#a0a0a0] bg-white p-px">
            <div className="relative h-full bg-[#808080]">
              <CommunicationDialog />
            </div>
          </div>
          <MessageWindow />
        </div>
        <VariableEditor />
      </main>
    </div>
  )
}
